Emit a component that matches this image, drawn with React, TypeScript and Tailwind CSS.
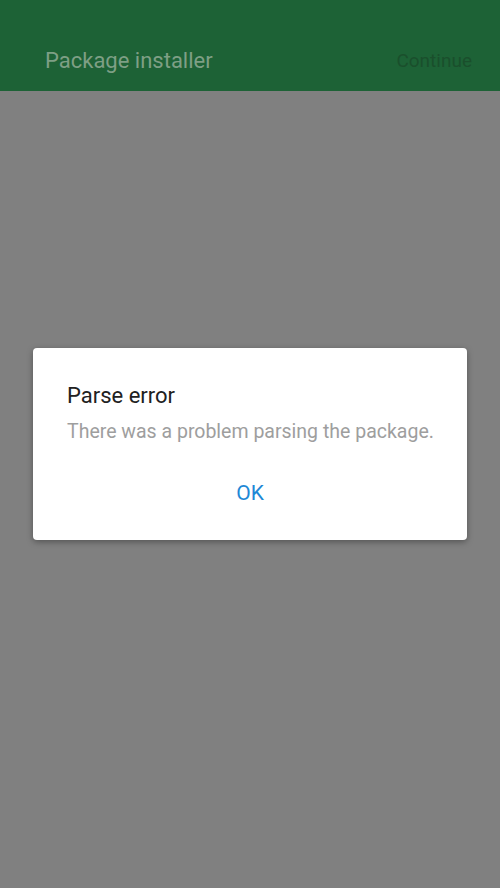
import React from "react";

export default function App() {
  return (
    <div className="w-[500px] h-[888px] bg-[#808080] flex flex-col" style={{ fontFamily: "Roboto, 'Noto Sans', sans-serif" }}>
      <div className="h-[91px] bg-[#1d6236] flex items-end justify-between pl-[45px] pr-[28px] pb-[15px]">
        <span className="text-[22px] leading-[30px] text-[#7e9f85]">Package installer</span>
        <span className="text-[19px] leading-[30px] text-[#1a4f2c]">Continue</span>
      </div>
      <div className="flex-1 flex flex-col items-center">
        <div className="mt-[257px] w-[434px] h-[192px] bg-white rounded-[4px] shadow-[0_2px_6px_rgba(0,0,0,0.35)] flex flex-col pl-[34px] pr-[10px] pt-[35px]">
          <div className="text-[22px] leading-[26px] text-[#212121]">Parse error</div>
          <div className="mt-[12px] text-[19.5px] leading-[22px] text-[#9e9e9e] whitespace-nowrap">There was a problem parsing the package.</div>
          <div className="mt-[37px] flex justify-center pr-[24px]">
            <span className="text-[21px] leading-[26px] text-[#1e88d6]">OK</span>
          </div>
        </div>
      </div>
    </div>
  );
}
